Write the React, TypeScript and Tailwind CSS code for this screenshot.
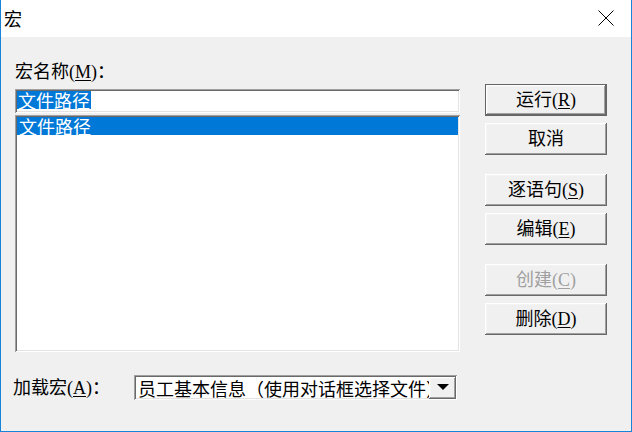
import React from 'react';

const raised =
    'shadow-[inset_-1px_-1px_0_#696969,inset_1px_1px_0_#ffffff,inset_-2px_-2px_0_#a0a0a0,inset_2px_2px_0_#f4f4f4]';
const sunken =
    'shadow-[inset_1px_1px_0_#a0a0a0,inset_-1px_-1px_0_#ffffff,inset_2px_2px_0_#696969,inset_-2px_-2px_0_#e3e3e3]';

const buttons = [
    { label: '运行', key: 'R', mt: 'mt-[47px]', isDefault: true },
    { label: '取消', key: '', mt: 'mt-[7px]' },
    { label: '逐语句', key: 'S', mt: 'mt-[19px]' },
    { label: '编辑', key: 'E', mt: 'mt-[7px]' },
    { label: '创建', key: 'C', mt: 'mt-[19px]', disabled: true },
    { label: '删除', key: 'D', mt: 'mt-[7px]' },
];

const Mnemonic: React.FC<{ k: string }> = ({ k }) =>
    k ? (
        <span>
            (<span className="underline underline-offset-2">{k}</span>)
        </span>
    ) : null;

const App: React.FC = () => {
    return (
        <div className="w-[632px] h-[432px] flex flex-col border-x border-b border-[#1883d7] bg-[#f0f0f0] text-black text-[18px] leading-[20px] font-['Liberation_Serif','Noto_Sans_CJK_SC',serif] overflow-hidden">
            {/* title bar */}
            <div className="h-[37px] shrink-0 bg-white flex items-center justify-between pl-[3px] pr-[17px]">
                <span className="font-['Noto_Sans_CJK_SC',sans-serif] -mt-[2px]">宏</span>
                <svg width="16" height="16" viewBox="0 0 16 16" className="-mt-[1px]">
                    <path d="M0.5 0.5 L15.5 15.5 M15.5 0.5 L0.5 15.5" stroke="#000" strokeWidth="1" fill="none" />
                </svg>
            </div>

            {/* body */}
            <div className="flex-1 flex flex-col">
                <div className="flex">
                    <div className="ml-[14px] w-[445px] flex flex-col">
                        <div className="mt-[25px] h-[20px]">
                            宏名称<Mnemonic k="M" />：
                        </div>
                        <div className={`mt-[7px] h-[24px] bg-white ${sunken} pl-[2px] pt-[2px]`}>
                            <span className="inline-block bg-[#0078d7] text-white h-[18px] leading-[18px] px-[1px] font-['Noto_Sans_CJK_SC',sans-serif]">
                                文件路径
                            </span>
                        </div>
                        <div className={`mt-[2px] h-[237px] bg-white ${sunken} p-[2px]`}>
                            <div className="h-[18px] leading-[18px] bg-[#0078d7] text-white pl-[2px] font-['Noto_Sans_CJK_SC',sans-serif]">
                                文件路径
                            </div>
                        </div>
                    </div>

                    <div className="ml-[25px] w-[122px] flex flex-col">
                        {buttons.map((b) => (
                            <div
                                key={b.label}
                                className={`${b.mt} h-[32px] flex items-center justify-center bg-[#f0f0f0] ${
                                    b.isDefault ? 'border border-[#646464]' : ''
                                } ${raised} ${b.disabled ? 'text-[#a0a0a0]' : ''}`}
                            >
                                <span>
                                    {b.label}
                                    <Mnemonic k={b.key} />
                                </span>
                            </div>
                        ))}
                    </div>
                </div>

                {/* load macro row */}
                <div className="flex items-center mt-[23px]">
                    <div className="ml-[12px] w-[121px]">
                        加载宏<Mnemonic k="A" />：
                    </div>
                    <div className={`w-[323px] h-[25px] bg-white ${sunken} flex items-center pl-[4px] pr-[1px]`}>
                        <div className="flex-1 overflow-hidden whitespace-nowrap font-['Noto_Sans_CJK_SC',sans-serif]">
                            员工基本信息（使用对话框选择文件）
                        </div>
                        <div className={`w-[27px] h-[22px] shrink-0 flex items-center justify-center bg-[#f0f0f0] ${raised}`}>
                            <svg width="12" height="7" viewBox="0 0 12 7">
                                <path d="M0 0 L12 0 L6 6 Z" fill="#000" />
                            </svg>
                        </div>
                    </div>
                </div>
            </div>
        </div>
    );
};

export default App;
